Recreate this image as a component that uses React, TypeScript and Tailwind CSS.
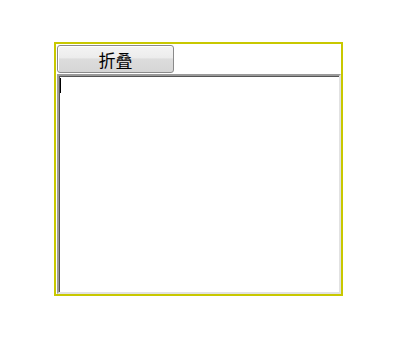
import { useState } from 'react';

export default function App() {
  const [open, setOpen] = useState(true);
  const [text, setText] = useState('');

  return (
    <div className="min-h-[351px] w-[416px] bg-white pl-[54px] pt-[42px]">
      <div className="flex h-[254px] w-[289px] flex-col items-start border-2 border-[#c8c800] pl-px pt-px">
        <button
          type="button"
          onClick={() => setOpen(!open)}
          className="flex h-[28px] w-[117px] items-center justify-center rounded-[3px] border border-[#8a8a8a] bg-[linear-gradient(to_bottom,#f4f4f4_0%,#ececec_45%,#dcdcdc_50%,#d6d6d6_100%)] pt-px text-[17px] leading-none text-black shadow-[inset_1px_1px_0_#ffffff]"
          style={{ fontFamily: '"Noto Sans CJK SC", "Noto Sans", sans-serif' }}
        >
          {open ? '折叠' : '展开'}
        </button>
        {open && (
          <div className="relative mt-px">
            <textarea
              value={text}
              onChange={(e) => setText(e.target.value)}
              className="block h-[220px] w-[284px] resize-none border-2 border-t-[#9a9a9a] border-l-[#9a9a9a] border-r-[#e2e2e2] border-b-[#e2e2e2] bg-white p-px text-[13px] text-black shadow-[inset_1px_1px_0_#555555] outline-none"
              style={{ fontFamily: '"Liberation Sans", sans-serif' }}
            />
            {text === '' && (
              <span className="pointer-events-none absolute left-[3px] top-[4px] h-[15px] w-px bg-black" />
            )}
          </div>
        )}
      </div>
    </div>
  );
}
